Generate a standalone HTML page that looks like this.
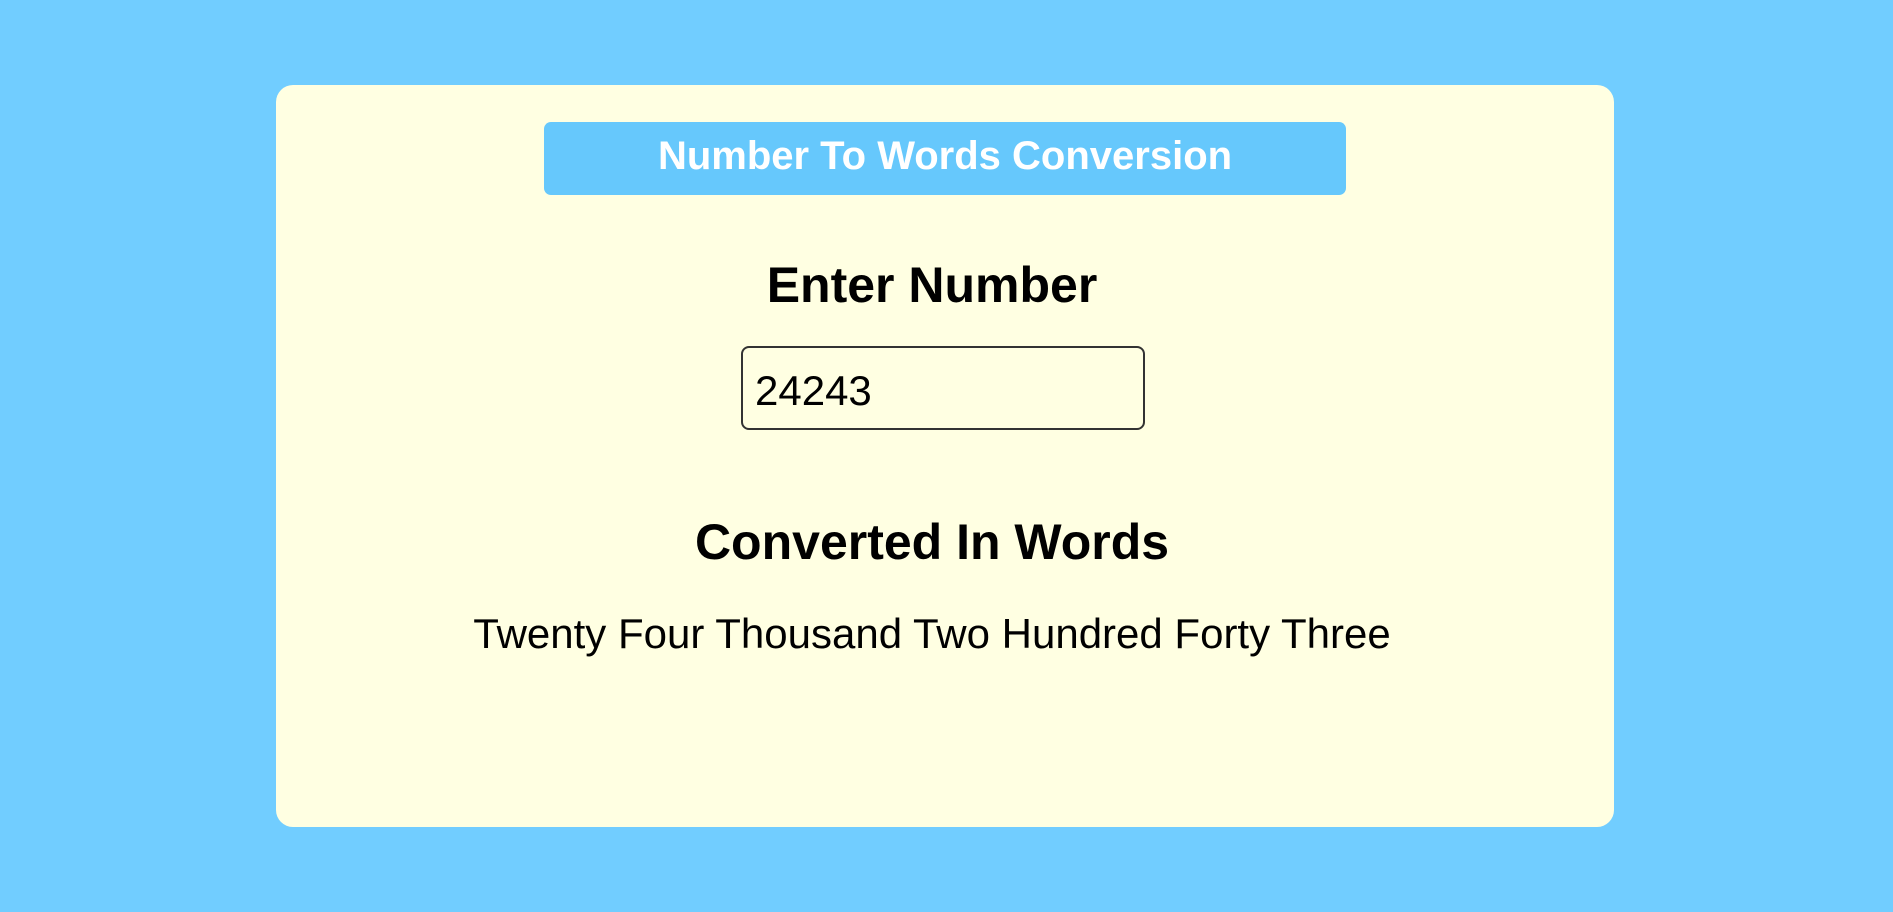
<!DOCTYPE html>
<html><head><meta charset="utf-8"><style>
html,body{margin:0;padding:0;width:1893px;height:912px;background:#71cdff;overflow:hidden;font-family:"Comic Sans MS","Liberation Sans",sans-serif;}
.card{position:absolute;left:276px;top:85px;width:1338px;height:742px;background:#ffffe2;border-radius:17px;}
.hdr{position:absolute;left:268px;top:37px;width:802px;height:73px;background:#66c8fc;border-radius:7px;color:#fff;font-weight:bold;font-size:40px;text-align:center;line-height:68px;}
.t{position:absolute;left:-13px;width:1338px;text-align:center;color:#000;}
.h{font-weight:bold;font-size:50px;}
.inp{position:absolute;left:465px;top:261px;width:404px;height:84px;border:2px solid #333;border-radius:8px;box-sizing:border-box;font-size:42px;line-height:86px;padding-left:12px;}
.w{font-size:42px;}
</style></head><body>
<div class="card">
<div class="hdr">Number To Words Conversion</div>
<div class="t h" style="top:170px;line-height:60px;">Enter Number</div>
<div class="inp">24243</div>
<div class="t h" style="top:427px;line-height:60px;">Converted In Words</div>
<div class="t w" style="top:522px;line-height:54px;">Twenty Four Thousand Two Hundred Forty Three</div>
</div>
</body></html>
